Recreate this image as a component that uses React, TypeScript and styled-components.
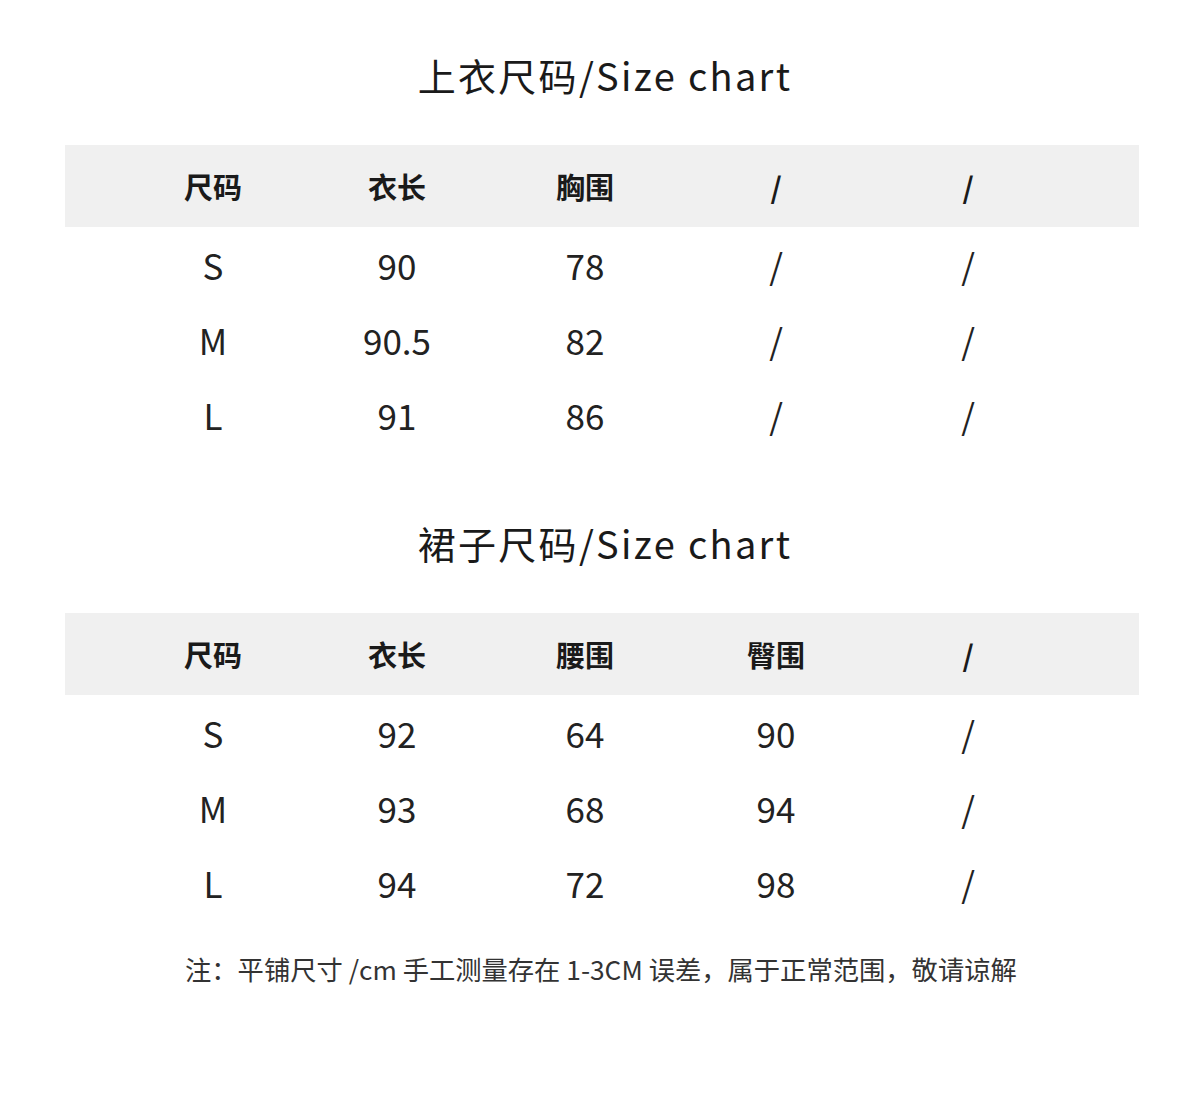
import React from 'react';
import styled, { createGlobalStyle } from 'styled-components';

const GlobalStyle = createGlobalStyle`
  body {
    margin: 0;
    background: #ffffff;
    font-family: 'Noto Sans CJK SC', 'Noto Sans', sans-serif;
    color: #1f1f1f;
  }
`;

const Page = styled.div`
  width: 1200px;
  min-height: 1096px;
  padding-top: 50px;
  box-sizing: border-box;
`;

const Section = styled.section`
  & + & {
    margin-top: 66px;
  }
`;

const Title = styled.h1`
  margin: 0 0 45px 0;
  padding-left: 10px;
  height: 50px;
  line-height: 50px;
  text-align: center;
  font-size: 38px;
  font-weight: 400;
  letter-spacing: 2.3px;
  color: #1a1a1a;
`;

const Table = styled.div`
  margin: 0 61px 0 65px;
`;

const columns = '182px 186px 190px 192px 192px';

const HeaderRow = styled.div`
  display: grid;
  grid-template-columns: ${columns};
  align-items: center;
  height: 82px;
  padding-left: 57px;
  background: #f0f0f0;
`;

const HeadCell = styled.div`
  text-align: center;
  font-size: 29px;
  font-weight: 700;
  color: #1a1a1a;
`;

const Body = styled.div`
  padding-top: 0;
`;

const Row = styled.div`
  display: grid;
  grid-template-columns: ${columns};
  align-items: center;
  height: 75px;
  padding-left: 57px;
`;

const Cell = styled.div`
  text-align: center;
  font-size: 35px;
  font-weight: 400;
  color: #222222;
`;

const Note = styled.p`
  margin: 31px 0 0 185px;
  line-height: 36px;
  font-size: 26.3px;
  color: #333333;
`;

type Chart = {
  title: string;
  head: string[];
  rows: string[][];
};

const charts: Chart[] = [
  {
    title: '上衣尺码/Size chart',
    head: ['尺码', '衣长', '胸围', '/', '/'],
    rows: [
      ['S', '90', '78', '/', '/'],
      ['M', '90.5', '82', '/', '/'],
      ['L', '91', '86', '/', '/'],
    ],
  },
  {
    title: '裙子尺码/Size chart',
    head: ['尺码', '衣长', '腰围', '臀围', '/'],
    rows: [
      ['S', '92', '64', '90', '/'],
      ['M', '93', '68', '94', '/'],
      ['L', '94', '72', '98', '/'],
    ],
  },
];

const App = () => (
  <Page>
    <GlobalStyle />
    {charts.map((chart) => (
      <Section key={chart.title}>
        <Title>{chart.title}</Title>
        <Table>
          <HeaderRow>
            {chart.head.map((h, i) => (
              <HeadCell key={i}>{h}</HeadCell>
            ))}
          </HeaderRow>
          <Body>
            {chart.rows.map((row) => (
              <Row key={row[0]}>
                {row.map((v, i) => (
                  <Cell key={i}>{v}</Cell>
                ))}
              </Row>
            ))}
          </Body>
        </Table>
      </Section>
    ))}
    <Note>注：平铺尺寸 /cm 手工测量存在 1-3CM 误差，属于正常范围，敬请谅解</Note>
  </Page>
);

export default App;
